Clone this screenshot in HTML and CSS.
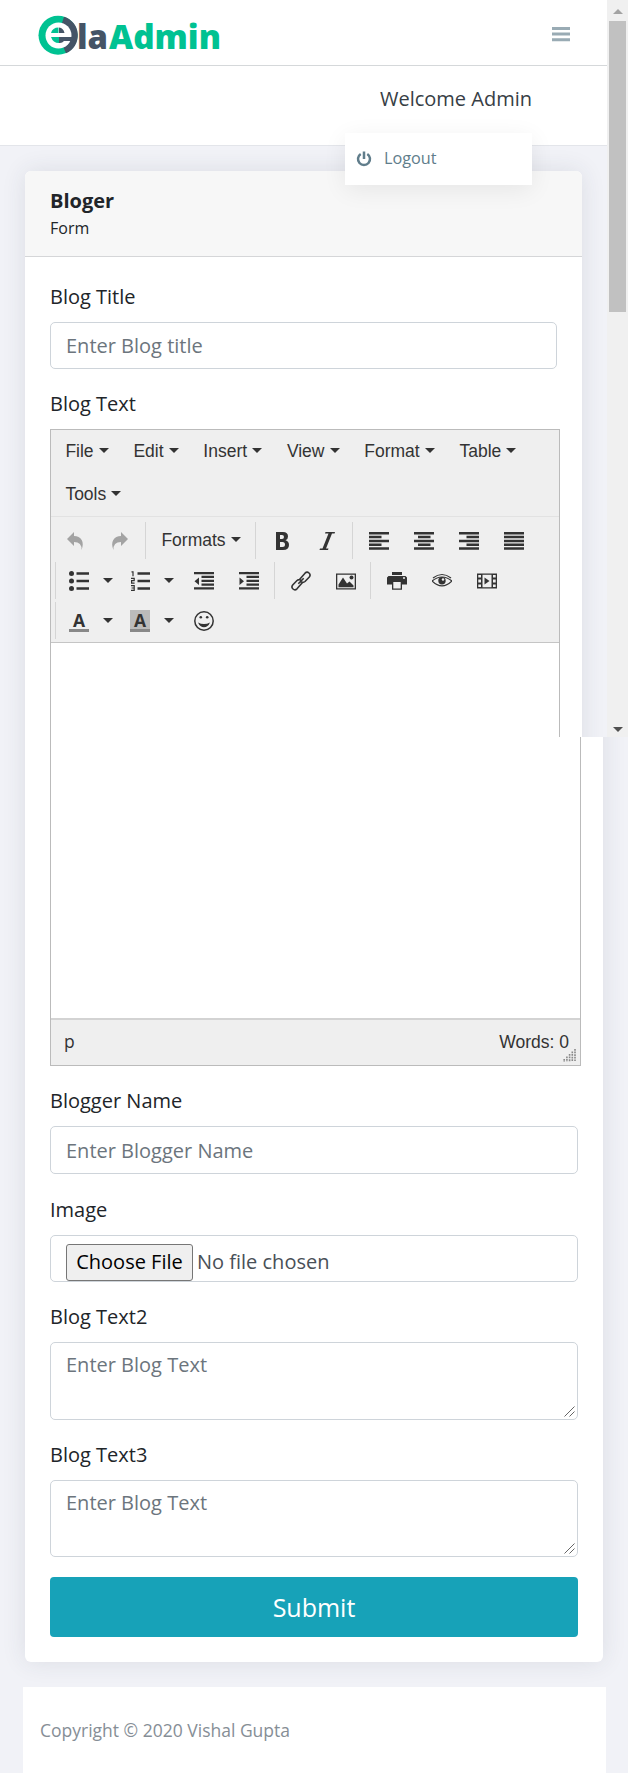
FILE: index.html
```html
<!DOCTYPE html>
<html lang="en">
<head>
<meta charset="utf-8">
<title>Ela Admin</title>
<link rel="stylesheet" href="styles.css">
</head>
<body>
<div class="viewport">
  <div class="page">
    <header class="topbar">
      <svg class="logo" width="190" height="60" viewBox="0 -8 190 60">
        <circle cx="20" cy="20.300" r="19.500" fill="#00c292"/>
        <path d="M20 20.300L26 1.700A19.500 19.500 0 0 1 28 38.300Z" fill="#455466"/>
        <circle cx="20.500" cy="20.500" r="13" fill="#fff"/>
        <path d="M13 18Q14.500 12.500 20.500 12.500V18Z M13 22H21V28Q15 28 13 22Z" fill="#00c292"/>
        <path d="M21 12.500Q25.500 13 26.500 18H21Z M21 22H37V26H29L26 26Q24 28.500 21 28Z" fill="#455466"/>
        <text class="logo-text" x="39" y="34" fill="#455466" textLength="31" lengthAdjust="spacingAndGlyphs">la</text>
        <text class="logo-text" x="71" y="34" fill="#00c292" textLength="112" lengthAdjust="spacingAndGlyphs">Admin</text>
      </svg>
      <svg class="burger" width="18" height="15" viewBox="0 0 18 15"><path d="M0 0h18v3H0zM0 5.500h18v3H0zM0 11.200h18v3H0z" fill="#99abb4"/></svg>
    </header>
    <div class="welcome"><span>Welcome Admin</span>
      <div class="dropdown">
        <svg width="16" height="16" viewBox="0 0 16 16" fill="none" stroke="#607d8b" stroke-width="2.500"><path d="M4.700 3A6 6 0 1 0 11.300 3M8 .5V8"/></svg>
        <span>Logout</span>
      </div>
    </div>
    <main class="main">
      <section class="card card-top">
        <div class="card-header"><strong>Bloger</strong><span>Form</span></div>
        <div class="card-body">
          <label class="label">Blog Title</label>
          <input class="control" type="text" placeholder="Enter Blog title">
          <label class="label">Blog Text</label>
          <div class="editor editor-top">
            <div class="menubar">
              <span class="menu">File</span><span class="menu">Edit</span><span class="menu">Insert</span><span class="menu">View</span><span class="menu">Format</span><span class="menu">Table</span><span class="menu">Tools</span>
            </div>
            <div class="toolbar">
              <div class="row">
                <div class="group first">
                  <span class="btn muted"><svg viewBox="0 0 20 20"><path d="M2 8L9 1V5C16 5 20 11 16.500 19Q17 11 9 11V15Z"/></svg></span>
                  <span class="btn muted"><svg viewBox="0 0 20 20"><path d="M18 8L11 1V5C4 5 0 11 3.500 19Q3 11 11 11V15Z"/></svg></span>
                </div>
                <div class="group"><span class="formats menu">Formats</span></div>
                <div class="group">
                  <span class="btn"><svg viewBox="0 0 20 20"><path fill-rule="evenodd" d="M4 1H11Q16 1 16 5.500Q16 8.500 13.500 9.300Q17 10.300 17 14Q17 19 11 19H4ZM8 4V8H10Q12 8 12 6T10 4ZM8 11V16H10.500Q13 16 13 13.500T10.500 11Z"/></svg></span>
                  <span class="btn"><svg viewBox="0 0 20 20"><path d="M8.500 1H18L17.600 2.500H15L9 17.500H11.500L11 19H2.500L3 17.500H5.500L11.500 2.500H8Z"/></svg></span>
                </div>
                <div class="group">
                  <span class="btn"><svg viewBox="0 0 20 20"><path d="M0 1h20v2.500H0zM0 4.800h12.500v2.500H0zM0 8.700h20v2.500H0zM0 12.500h12.500V15H0zM0 16.300h20v2.500H0z"/></svg></span>
                  <span class="btn"><svg viewBox="0 0 20 20"><path d="M0 1h20v2.500H0zM4 4.800h12.500v2.500H4zM0 8.700h20v2.500H0zM4 12.500h12.500V15H4zM0 16.300h20v2.500H0z"/></svg></span>
                  <span class="btn"><svg viewBox="0 0 20 20"><path d="M0 1h20v2.500H0zM7.500 4.800H20v2.500H7.500zM0 8.700h20v2.500H0zM7.500 12.500H20V15H7.500zM0 16.300h20v2.500H0z"/></svg></span>
                  <span class="btn"><svg viewBox="0 0 20 20"><path d="M0 1h20v2.500H0zM0 4.800h20v2.500H0zM0 8.700h20v2.500H0zM0 12.500h20V15H0zM0 16.300h20v2.500H0z"/></svg></span>
                </div>
              </div>
              <div class="row">
                <div class="group lead">
                  <span class="btn split"><svg viewBox="0 0 20 20"><circle cx="2.500" cy="2.500" r="2.500"/><circle cx="2.500" cy="10" r="2.500"/><circle cx="2.500" cy="17.500" r="2.500"/><path d="M7.500 1.300H20v2.500H7.500zM7.500 8.800H20v2.500H7.500zM7.500 16.200H20v2.500H7.500z"/></svg></span><span class="open"></span>
                  <span class="btn split"><svg viewBox="0 0 20 20"><path d="M7.500 1.300H20v2.500H7.500zM7.500 8.800H20v2.500H7.500zM7.500 16.200H20v2.500H7.500z"/><path fill="none" stroke="#333" stroke-width="1.200" d="M1.500 .8H3V5.300M1 7.400H4.200V9.600H1.600V12.200H4.600M1 14.600H4.200V19.300H1M1.500 17H4.200"/></svg></span><span class="open"></span>
                  <span class="btn"><svg viewBox="0 0 20 20"><path d="M0 1h20v2.300H0zM7.500 4.800H20v2.300H7.500zM7.500 8.700H20V11H7.500zM7.500 12.500H20v2.300H7.500zM0 16.300h20v2.300H0zM5 6.500v7.500L.5 10.200z"/></svg></span>
                  <span class="btn"><svg viewBox="0 0 20 20"><path d="M0 1h20v2.300H0zM7.500 4.800H20v2.300H7.500zM7.500 8.700H20V11H7.500zM7.500 12.500H20v2.300H7.500zM0 16.300h20v2.300H0zM.5 6.500v7.500L5 10.200z"/></svg></span>
                </div>
                <div class="group">
                  <span class="btn"><svg viewBox="0 0 20 20" class="line"><path d="M8.500 8.500L14 2.200Q16 .3 18 2T18.300 6L14 10.500Q12 12.200 10 10.800M11.500 11.500L6 17.800Q4 19.700 2 18T1.700 14L6 9.500Q8 7.800 10 9.200M7.300 12.700L12.700 7.300" stroke-width="1.600"/></svg></span>
                  <span class="btn"><svg viewBox="0 0 20 20"><path fill-rule="evenodd" d="M0 2.500H20V18.500H0ZM1.300 3.800V17.200H18.700V3.800Z"/><path d="M2.500 16.200V13.500L7 6.500L11 12.500L13.500 10.500L17.500 14.500V16.200Z"/><circle cx="15.500" cy="6.500" r="2"/></svg></span>
                </div>
                <div class="group tight">
                  <span class="btn"><svg viewBox="0 0 20 20"><path fill-rule="evenodd" d="M5 1H15V4H5ZM1.500 5H18.500L20 6.500V13.500H15V18.800H5V13.500H0V6.500ZM6.300 11V17.500H13.700V11ZM16 6.300V7.800H18V6.300Z"/></svg></span>
                  <span class="btn"><svg viewBox="0 0 20 20" class="line"><path d="M0 10Q10 2 20 10Q10 20 0 10ZM1 7Q10 0 19 7" stroke-width="1.200"/><circle cx="10" cy="9.800" r="3.700" fill="#333" stroke="none"/><circle cx="11" cy="8.500" r="1.200" fill="#efefef" stroke="none"/></svg></span>
                  <span class="btn"><svg viewBox="0 0 20 20"><path fill-rule="evenodd" d="M0 2.500H20V17.500H0ZM5.500 3.800V16.200H14.500V3.800ZM1.300 4H4V6.500H1.300ZM1.300 8.500H4V11.500H1.300ZM1.300 13.500H4V16H1.300ZM16 4H18.700V6.500H16ZM16 8.500H18.700V11.500H16ZM16 13.500H18.700V16H16Z"/><path d="M7.500 6.500V13.500L12.500 10Z"/></svg></span>
                </div>
              </div>
              <div class="row">
                <div class="group lead">
                  <span class="btn split"><span class="letter">A</span></span><span class="open"></span>
                  <span class="btn split"><span class="letter shaded">A</span></span><span class="open"></span>
                  <span class="btn"><svg viewBox="0 0 20 20" class="line"><circle cx="10" cy="10" r="9.200" stroke-width="1.500"/><circle cx="6.800" cy="6.300" r="1.300" fill="#333" stroke="none"/><circle cx="13.200" cy="6.300" r="1.300" fill="#333" stroke="none"/><path d="M4 11.500Q10 14.500 16 11.500Q14 16.200 10 16.200T4 11.500Z" fill="#333" stroke="none"/></svg></span>
                </div>
              </div>
            </div>
          </div>
        </div>
      </section>
    </main>
  </div>
  <aside class="scrollbar"><span class="arrow up"></span><span class="thumb"></span><span class="arrow down"></span></aside>
</div>
<div class="rest">
  <section class="card card-bottom">
    <div class="editor editor-bottom">
      <div class="status"><span class="path">p</span><span>Words: 0</span>
        <svg class="grip" width="13" height="13" viewBox="0 0 13 13"><path d="M1.200 10v3M3.900 7.500v5.500M6.600 5v8M9.300 2.500v10.500M12 0v13" stroke="#888" stroke-width="1.600" stroke-dasharray="1.700 .9"/></svg>
      </div>
    </div>
    <label class="label">Blogger Name</label>
    <input class="control tall" type="text" placeholder="Enter Blogger Name">
    <label class="label">Image</label>
    <div class="control file"><span class="file-btn">Choose File</span><span class="file-name">No file chosen</span></div>
    <label class="label">Blog Text2</label>
    <div class="area-wrap"><textarea class="control area" placeholder="Enter Blog Text"></textarea><svg class="resize" width="11" height="11" viewBox="0 0 11 11"><path d="M.5 10.500L10.500 .5M5.500 10.500L10.500 5.500" stroke="#666"/></svg></div>
    <label class="label">Blog Text3</label>
    <div class="area-wrap"><textarea class="control area short" placeholder="Enter Blog Text"></textarea><svg class="resize" width="11" height="11" viewBox="0 0 11 11"><path d="M.5 10.500L10.500 .5M5.500 10.500L10.500 5.500" stroke="#666"/></svg></div>
    <button class="submit" type="button">Submit</button>
  </section>
  <footer class="footer">Copyright © 2020 Vishal Gupta</footer>
</div>
</body>
</html>
```
FILE: styles.css
```css
* { box-sizing: border-box; }
body { margin: 0; width: 628px; height: 1773px; overflow: hidden; background: #f1f2f7; font: 20px/30px "Open Sans", sans-serif; color: #212529; }
.viewport { display: flex; height: 737px; overflow: hidden; }
.page { width: 607px; height: 737px; overflow: hidden; }
.topbar { display: flex; justify-content: space-between; height: 66px; padding: 7px 37px 0 38px; background: #fff; border-bottom: 1px solid #d5d8da; }
.logo { display: block; flex: none; height: 60px; margin-bottom: -2px; }
.logo-text { font: 800 33.5px "Open Sans", sans-serif; }
.burger { margin-top: 20px; }
.welcome { position: relative; height: 80px; padding: 18px 75px 0 0; background: #fff; border-bottom: 1px solid #e3e5ea; text-align: right; color: #373e45; font-size: 20px; }
.dropdown { position: absolute; z-index: 2; left: 345px; top: 67px; width: 187px; height: 52px; display: flex; align-items: center; gap: 12px; padding: 0 11px 2px; background: #fff; box-shadow: 0 5px 25px rgba(0, 0, 0, .07); color: #607d8b; font-size: 16.25px; }
.dropdown svg { position: relative; top: 1px; }
.main { padding: 25px; }
.card { background: #fff; box-shadow: 0 0 25px rgba(50, 55, 75, .11); }
.card-top { width: 557px; height: 700px; border-radius: 6px; }
.card-header { display: flex; flex-direction: column; height: 86px; padding: 15px 25px 0; background: #f7f7f7; border-bottom: 1px solid #d5d6d8; border-radius: 6px 6px 0 0; }
.card-header strong { line-height: 30px; }
.card-header span { font-size: 16px; line-height: 24px; }
.card-body { padding: 25px 25px 0; }
.label { display: block; height: 30px; margin-bottom: 10px; }
.control { display: block; width: 100%; height: 47px; margin: 0 0 20px; padding: 7px 15px; border: 1px solid #ced4da; border-radius: 5px; background: #fff; color: #495057; font: 20px/30px "Open Sans", sans-serif; }
.control::placeholder { color: #6c757d; opacity: 1; }
.editor { border: 1px solid #bbb; background: #fff; font-family: "Liberation Sans", Arial, sans-serif; font-size: 17.5px; color: #333; }
.editor-top { width: 510px; height: 480px; }
.menubar { display: flex; flex-wrap: wrap; align-content: flex-start; height: 87px; padding-left: 2px; background: #efefef; border-bottom: 1px solid #e2e2e2; }
.menu { display: flex; align-items: center; height: 43px; padding: 0 12.4px 2px; }
.menu::after, .open::after { content: ""; margin-left: 5px; border: 5px solid transparent; border-top-color: #333; border-bottom: 0; }
.toolbar { height: 126px; padding-top: 5px; background: #efefef; border-bottom: 1px solid #c5c5c5; }
.row { display: flex; height: 37px; margin-bottom: 3px; }
.group { display: flex; align-items: center; padding: 0 3px; border-left: 1px solid #d5d5d5; }
.group.first { padding: 0 2px 0 1px; margin-right: 1px; border: 0; }
.group.lead { margin-left: 4px; }
.group.tight { margin-left: -1px; }
.btn { display: flex; justify-content: center; align-items: center; width: 45px; height: 37px; }
.btn.split { width: 40px; }
.btn svg { width: 20px; height: 20px; fill: #333; }
.btn svg.line { fill: none; stroke: #333; }
.btn.muted svg { fill: #a3a3a3; }
.open { display: flex; width: 21px; }
.open::after { margin-left: 4px; }
.formats { width: 103px; height: 36px; white-space: nowrap; }
.letter { width: 20px; height: 22px; border-bottom: 3px solid #888; font: bold 17.5px/20px "Open Sans", sans-serif; text-align: center; }
.letter.shaded { background: #bbb; }
.scrollbar { display: flex; flex-direction: column; align-items: center; width: 21px; height: 737px; padding: 9px 0 5px; background: #f0f0f0; }
.arrow { border: 5px solid transparent; }
.arrow.up { border-top: 0; border-bottom-color: #a3a3a3; }
.arrow.down { margin-top: auto; border-bottom: 0; border-top-color: #505050; }
.thumb { width: 17px; height: 291px; margin-top: 7px; background: #c1c1c1; }
.rest { height: 1036px; overflow: hidden; }
.card-bottom { width: 578px; height: 965px; margin: -40px 0 0 25px; padding: 40px 25px 0; border-radius: 0 0 6px 6px; }
.editor-bottom { display: flex; align-items: flex-end; width: 531px; height: 329px; margin-bottom: 20px; border-top: 0; }
.status { position: relative; display: flex; justify-content: space-between; width: 100%; height: 47px; padding: 9px 11px 0 13px; background: #efefef; border-top: 2px solid #d3d3d3; line-height: 26px; }
.path { font-family: "Open Sans", sans-serif; line-height: 24px; }
.grip { position: absolute; right: 4px; bottom: 3px; }
.tall { height: 48px; margin-bottom: 21px; }
.file { display: flex; gap: 4px; padding: 8px 15px 0; white-space: nowrap; }
.file-btn { height: 37px; width: 127px; text-align: center; line-height: 34px; color: #000; background: #efefef; border: 1px solid #767676; border-radius: 3px; }
.file-name { line-height: 36px; }
.area-wrap { position: relative; }
.area { height: 78px; overflow: hidden; resize: none; }
.area.short { height: 77px; }
.resize { position: absolute; right: 3px; bottom: 3px; fill: none; }
.submit { display: block; width: 100%; height: 60px; padding: 0; border: 0; border-radius: 4px; background: #17a2b8; color: #fff; font: 25px/60px "Open Sans", sans-serif; }
.footer { width: 583px; height: 86px; margin: 25px 0 0 23px; padding: 28px 17px; background: #fff; color: #868e96; font-size: 17.5px; }
```
